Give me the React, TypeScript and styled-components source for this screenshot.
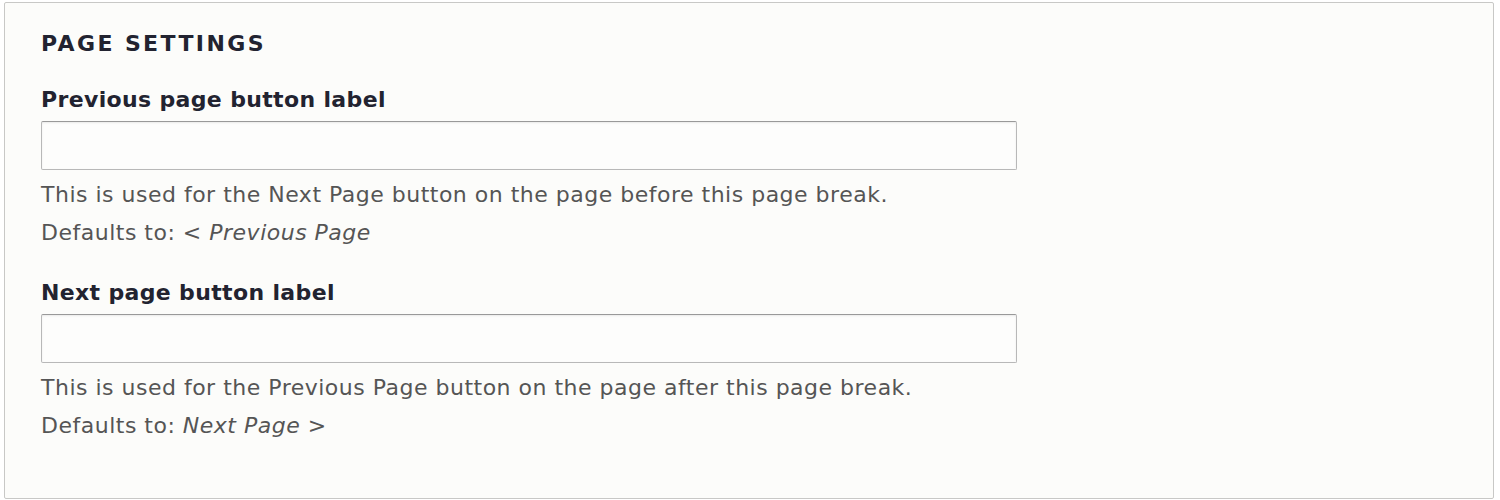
import React from "react";
import styled, { createGlobalStyle } from "styled-components";

const GlobalStyle = createGlobalStyle`
    html, body {
        margin: 0;
        padding: 0;
        background: #ffffff;
    }
`;

type FieldProps = {
    label: string;
    description: string;
    defaultValue: string;
};

const Field = ({ label, description, defaultValue }: FieldProps) => (
    <FieldItem>
        <Label>{label}</Label>
        <TextInput type="text" />
        <Description>
            <div>{description}</div>
            <div>
                Defaults to: <em>{defaultValue}</em>
            </div>
        </Description>
    </FieldItem>
);

const App = () => {
    return (
        <>
            <GlobalStyle />
            <Fieldset>
                <Legend>Page settings</Legend>
                <Field
                    label="Previous page button label"
                    description="This is used for the Next Page button on the page before this page break."
                    defaultValue="< Previous Page"
                />
                <Field
                    label="Next page button label"
                    description="This is used for the Previous Page button on the page after this page break."
                    defaultValue="Next Page >"
                />
            </Fieldset>
        </>
    );
};

export default App;

const Fieldset = styled.div`
    box-sizing: border-box;
    margin: 2px 0 0 4px;
    width: 1490px;
    height: 497px;
    padding: 26px 36px 0 36px;
    border: 1px solid #c8c8c6;
    border-radius: 2px;
    background: #fcfcfa;
    font-family: "DejaVu Sans", "Liberation Sans", sans-serif;
    display: flex;
    flex-direction: column;
    gap: 26px;
`;

const Legend = styled.div`
    font-size: 22px;
    font-weight: bold;
    text-transform: uppercase;
    letter-spacing: 2.4px;
    color: #222330;
    line-height: 30px;
`;

const FieldItem = styled.div`
    display: flex;
    flex-direction: column;
`;

const Label = styled.label`
    font-size: 22px;
    font-weight: bold;
    letter-spacing: 0.35px;
    color: #222330;
    line-height: 30px;
    margin-bottom: 6px;
`;

const TextInput = styled.input`
    box-sizing: border-box;
    width: 976px;
    height: 49px;
    margin: 0;
    border: 1px solid #b8b8b8;
    border-top-color: #999999;
    border-radius: 2px;
    background: #fdfdfc;
    box-shadow: inset 0 1px 2px rgba(0, 0, 0, 0.08);
    outline: none;
`;

const Description = styled.div`
    font-size: 22px;
    letter-spacing: 0.5px;
    color: #555555;
    line-height: 38px;
    margin-top: 6px;

    em {
        font-style: italic;
    }
`;
